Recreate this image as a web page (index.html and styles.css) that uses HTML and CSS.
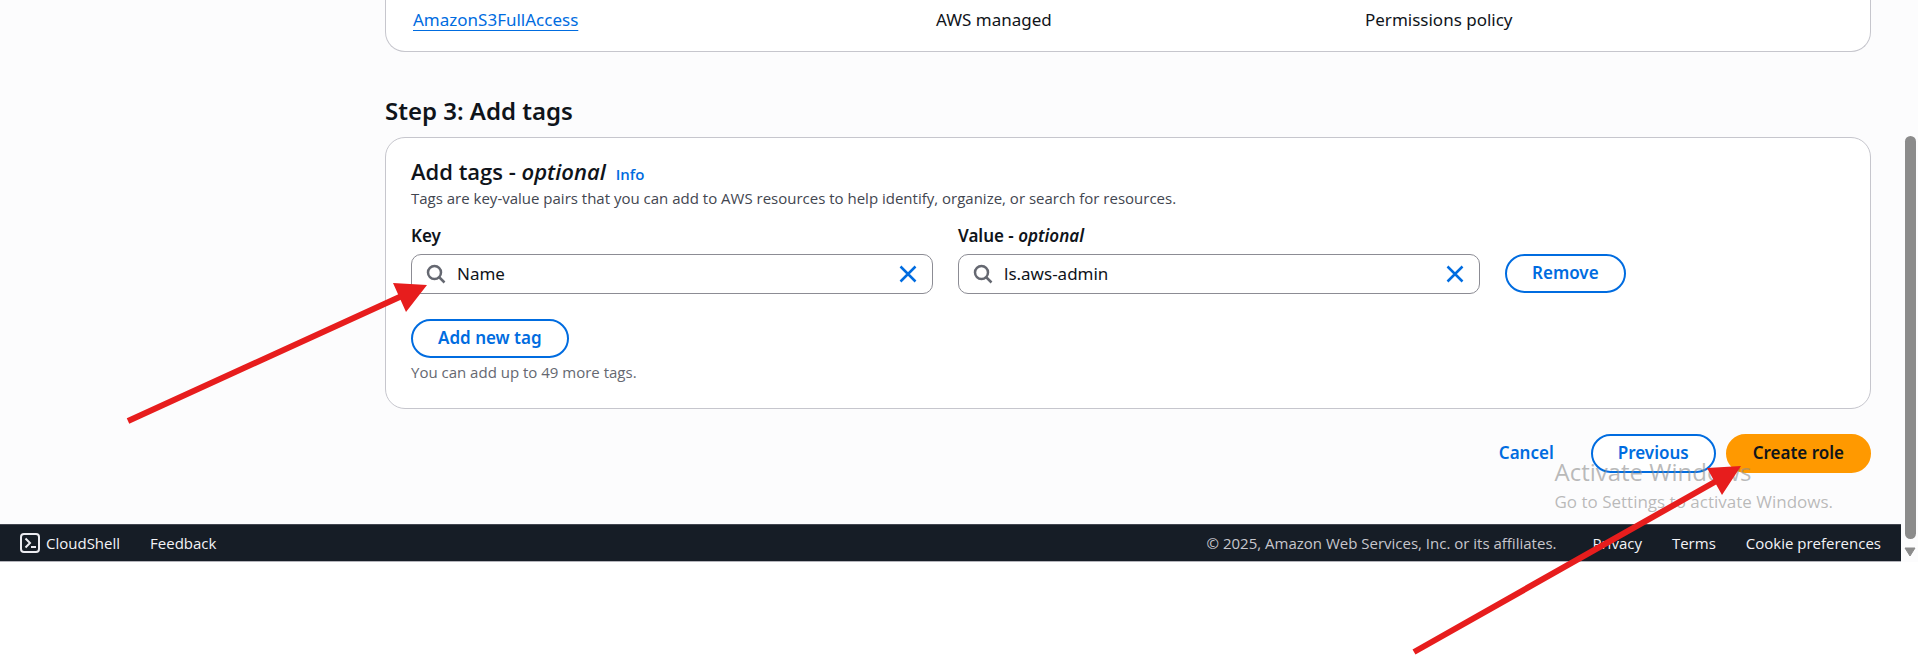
FILE: index.html
```html
<!DOCTYPE html>
<html lang="en">
<head>
<meta charset="utf-8">
<title>Create role</title>
<link rel="stylesheet" href="styles.css">
</head>
<body>
<div class="shell">
  <div class="page">
    <main class="content">
      <section class="card card-policies">
        <table class="policies">
          <tbody>
            <tr>
              <td class="col-name"><a class="policy-link" href="#">AmazonS3FullAccess</a></td>
              <td class="col-type">AWS managed</td>
              <td>Permissions policy</td>
            </tr>
          </tbody>
        </table>
      </section>

      <h2 class="step-title">Step 3: Add tags</h2>

      <section class="card card-tags">
        <div class="card-header">
          <h3 class="card-title">Add tags - <i>optional</i></h3>
          <a class="info" href="#">Info</a>
        </div>
        <p class="description">Tags are key-value pairs that you can add to AWS resources to help identify, organize, or search for resources.</p>

        <div class="tag-row">
          <div class="field">
            <label class="label" for="tag-key">Key</label>
            <div class="search-box">
              <svg class="icon" viewBox="0 0 20 20" aria-hidden="true"><circle cx="8.500" cy="8.500" r="6.500"/><path d="M13 13l5.500 5.500"/></svg>
              <input class="search-input" id="tag-key" type="text" value="Name">
              <button class="clear" type="button" aria-label="Clear key"><svg class="icon icon-blue" viewBox="0 0 20 20" aria-hidden="true"><path d="M2.500 2.500l15 15M17.500 2.500l-15 15"/></svg></button>
            </div>
          </div>
          <div class="field">
            <label class="label" for="tag-value">Value - <i>optional</i></label>
            <div class="search-box">
              <svg class="icon" viewBox="0 0 20 20" aria-hidden="true"><circle cx="8.500" cy="8.500" r="6.500"/><path d="M13 13l5.500 5.500"/></svg>
              <input class="search-input" id="tag-value" type="text" value="ls.aws-admin">
              <button class="clear" type="button" aria-label="Clear value"><svg class="icon icon-blue" viewBox="0 0 20 20" aria-hidden="true"><path d="M2.500 2.500l15 15M17.500 2.500l-15 15"/></svg></button>
            </div>
          </div>
          <div class="row-action"><button class="btn" type="button">Remove</button></div>
        </div>

        <button class="btn" type="button">Add new tag</button>
        <p class="hint">You can add up to 49 more tags.</p>
      </section>

      <div class="actions">
        <button class="btn btn-link" type="button">Cancel</button>
        <button class="btn" type="button">Previous</button>
        <button class="btn btn-primary" type="button">Create role</button>
      </div>
    </main>

    <footer class="footer">
      <a class="footer-link footer-shell" href="#">
        <svg class="shell-icon" viewBox="0 0 20 20" aria-hidden="true"><rect x="1" y="1" width="18" height="18" rx="3"/><path d="M5.500 5.500L10 10l-4.500 4.500M11 14h5"/></svg>
        CloudShell
      </a>
      <a class="footer-link" href="#">Feedback</a>
      <span class="copyright">© 2025, Amazon Web Services, Inc. or its affiliates.</span>
      <a class="footer-link" href="#">Privacy</a>
      <a class="footer-link" href="#">Terms</a>
      <a class="footer-link" href="#">Cookie preferences</a>
    </footer>
  </div>
  <div class="scrollbar" aria-hidden="true">
    <div class="thumb"></div>
    <svg class="scroll-arrow" viewBox="0 0 12 10"><path d="M1 1h10L6 9z"/></svg>
  </div>
</div>

<div class="watermark">
  <div class="watermark-title">Activate Windows</div>
  <div class="watermark-text">Go to Settings to activate Windows.</div>
</div>

<svg class="arrows" viewBox="0 0 1918 656" aria-hidden="true">
  <path class="arrow-line" d="M128 421L404 295M1414 652L1720 479"/>
  <path class="arrow-head" d="M393 283L427 285L406 312ZM1707 468L1741 466L1722 495Z"/>
</svg>
</body>
</html>
```
FILE: styles.css
```css
* {
  box-sizing: border-box;
}

body {
  position: relative;
  margin: 0;
  min-height: 100vh;
  background: #fff;
  color: #0f141a;
  font-family: "Noto Sans", "Open Sans", sans-serif;
  font-size: 17px;
  line-height: 24px;
  overflow: hidden;
}

a {
  color: #006ce0;
  text-decoration: none;
}

h2,
h3,
p {
  margin: 0;
}

.shell {
  display: flex;
  background: #fcfcfd;
}

.page {
  flex: 1;
}

.content {
  padding: 0 30px 51px 385px;
}

.card {
  background: #fff;
  border: 1px solid #c6c6cd;
  border-radius: 20px;
}

.card-policies {
  border-top: 0;
  border-radius: 0 0 20px 20px;
  padding: 8px 0 19px 27px;
}

.policies {
  width: 100%;
  table-layout: fixed;
  border-collapse: collapse;
}

.policies td {
  padding: 0;
}

.col-name {
  width: 523px;
}

.col-type {
  width: 429px;
}

.policy-link {
  text-decoration: underline;
  text-decoration-thickness: 1px;
  text-underline-offset: 4px;
}

.step-title {
  margin: 44px 0 11px;
  font-size: 24px;
  font-weight: 600;
  line-height: 30px;
}

.card-tags {
  padding: 18px 25px 25px;
}

.card-header {
  display: flex;
  align-items: baseline;
  gap: 10px;
}

.card-title {
  font-family: "Open Sans", sans-serif;
  font-size: 22px;
  font-weight: 600;
  line-height: 30px;
}

.info {
  font-family: "Open Sans", sans-serif;
  font-size: 15px;
  font-weight: 600;
  line-height: 20px;
}

.description,
.hint {
  font-family: "Open Sans", sans-serif;
  font-size: 15px;
  line-height: 20px;
}

.description {
  margin: 2px 0 16px;
  color: #424650;
}

.hint {
  margin: 4px 0 1px;
  color: #656871;
}

.tag-row {
  display: grid;
  grid-template-columns: 261fr 261fr 170fr;
  align-items: end;
  gap: 25px;
  margin-bottom: 25px;
}

.label {
  display: block;
  margin-bottom: 6px;
  font-weight: 600;
}

.search-box {
  display: flex;
  align-items: center;
  height: 40px;
  padding: 0 14px;
  border: 1px solid #8c8c94;
  border-radius: 10px;
}

.icon {
  display: block;
  width: 20px;
  height: 20px;
  fill: none;
  stroke: #656871;
  stroke-width: 2.5;
}

.icon-blue {
  stroke: #006ce0;
}

.search-input {
  flex: 1;
  min-width: 0;
  padding: 0 11px;
  border: 0;
  outline: 0;
  background: none;
  color: inherit;
  font: inherit;
}

.clear {
  padding: 0;
  border: 0;
  background: none;
}

.row-action {
  display: flex;
  height: 40px;
  align-items: start;
}

.btn {
  display: block;
  height: 39px;
  padding: 0 25px 2px;
  border: 2px solid #006ce0;
  border-radius: 20px;
  background: #fff;
  color: #006ce0;
  font: inherit;
  font-weight: 600;
  line-height: 24px;
}

.btn-link {
  border-color: transparent;
  background: none;
}

.btn-primary {
  border-color: #ff9900;
  background: #ff9900;
  color: #0f141a;
}

.actions {
  display: flex;
  justify-content: flex-end;
  gap: 10px;
  margin-top: 25px;
}

.footer {
  display: flex;
  align-items: center;
  gap: 30px;
  height: 38px;
  padding: 0 20px;
  border-top: 1px solid #424650;
  border-bottom: 1px solid #b4b4bb;
  background: #161d26;
  font-family: "Open Sans", sans-serif;
  font-size: 15px;
  line-height: 20px;
}

.footer-link {
  color: #f3f3f7;
}

.footer-shell {
  display: flex;
  gap: 6px;
}

.shell-icon {
  width: 20px;
  height: 20px;
  fill: none;
  stroke: #ebebf0;
  stroke-width: 2;
}

.copyright {
  margin-left: auto;
  margin-right: 6px;
  color: #c6c6cd;
}

.scrollbar {
  display: flex;
  flex-direction: column;
  align-items: flex-end;
  width: 17px;
  padding: 136px 2px 5px 0;
}

.thumb {
  flex: 1;
  width: 11px;
  border-radius: 6px;
  background: #8b8b8b;
}

.scroll-arrow {
  width: 12px;
  height: 10px;
  margin-top: 8px;
  fill: #8b8b8b;
  stroke: #8b8b8b;
  stroke-linejoin: round;
}

.watermark {
  position: absolute;
  top: 456px;
  right: 85px;
  color: rgba(140, 140, 140, 0.6);
  font-family: "Open Sans", sans-serif;
}

.watermark-title {
  font-size: 24px;
  line-height: 32px;
}

.watermark-text {
  font-size: 17px;
  line-height: 28px;
}

.arrows {
  position: absolute;
  top: 0;
  left: 0;
  width: 100%;
  pointer-events: none;
}

.arrow-line {
  stroke: #e71d1d;
  stroke-width: 6;
}

.arrow-head {
  fill: #e71d1d;
}
```
